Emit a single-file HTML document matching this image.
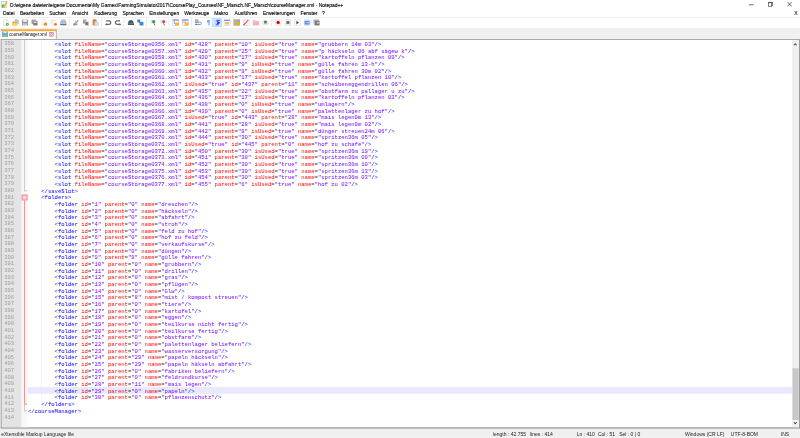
<!DOCTYPE html>
<html><head><meta charset="utf-8">
<style>
html,body{margin:0;padding:0;width:800px;height:438px;overflow:hidden;background:#fff;}
#outer{position:absolute;left:0;top:0;width:800px;height:438px;overflow:hidden;filter:blur(0.25px);}
#w{position:absolute;left:0;top:0;width:1920px;height:1051px;transform:scale(0.4166667);transform-origin:0 0;background:#fff;font-family:"Liberation Sans",sans-serif;font-size:12px;color:#000;overflow:hidden;}
.abs{position:absolute;}
#title{position:absolute;left:0;top:0;width:1920px;height:22px;background:#fff;}
#title .txt{position:absolute;left:24px;top:5.5px;font-size:12.6px;color:#000;white-space:nowrap;-webkit-text-stroke:0.3px #000;transform:scaleX(0.941);transform-origin:0 0;}
#menu{position:absolute;left:0;top:22px;width:1920px;height:20px;background:#fff;}
#menu span{position:absolute;top:3px;font-size:12.6px;white-space:nowrap;color:#000;-webkit-text-stroke:0.3px #000;transform:scaleX(0.952);transform-origin:0 0;}
#tb{position:absolute;left:0;top:43px;width:1920px;height:24px;background:#fff;}
#tb svg{position:absolute;top:3px;width:16px;height:16px;}
#tb .sep{position:absolute;top:1px;width:1px;height:20px;background:#d0d0d0;}
#tabbar{position:absolute;left:0;top:67px;width:1920px;height:27px;background:#f0f0f0;}
#tab{position:absolute;left:2px;top:3px;width:134px;height:24px;background:#fff;border-right:2px solid #a8a8a8;box-sizing:border-box;}
#tab .orange{position:absolute;left:0;top:0;width:133px;height:5px;background:#fbaa3c;}
#tab .name{position:absolute;left:20px;top:5.5px;font-size:12.6px;white-space:nowrap;transform:scaleX(0.824);transform-origin:0 0;}
#ed{position:absolute;left:2px;top:94px;width:1918px;height:935px;border:2px solid #a0a0a0;border-left-color:#8c8c8c;border-top-color:#999;border-right-color:#888;border-bottom:3px solid #707070;box-sizing:border-box;background:#fff;overflow:hidden;}
#lnm{position:absolute;left:0;top:0;width:48px;height:100%;background:#e4e4e4;}
#nums{position:absolute;left:0;top:2px;width:30px;text-align:right;font-family:"Liberation Mono",monospace;font-size:13.33px;line-height:16px;color:#a0a0a0;}
#fold{position:absolute;left:48px;top:0;width:14px;height:100%;background:#f8f8f8;}
.fl{position:absolute;}
#code{position:absolute;left:63px;top:3px;right:17px;font-family:"Liberation Mono",monospace;font-size:13.33px;line-height:16px;white-space:pre;-webkit-text-stroke:0.1px currentColor;}
.l{height:16px;}
.cur{}
#hl{position:absolute;left:62px;top:833px;right:17px;height:16px;background:#e8e8ff;}
b{font-weight:normal;}
.t{color:#2020ff;}
.a{color:#ff2020;}
.e{color:#303030;}
.v{color:#8020ff;}
#vs{position:absolute;right:0;top:0;width:17px;height:100%;background:#f0f0f0;}
#thumb{position:absolute;left:1px;top:788px;width:15px;height:124px;background:#c8c8c8;}
#vs svg{position:absolute;left:3px;width:9px;height:7px;}
#status{position:absolute;left:0;top:1029px;width:1920px;height:22px;background:#f0f0f0;border-top:1px solid #f8f8f8;box-sizing:border-box;}
#status span{position:absolute;top:5px;font-size:12.6px;white-space:nowrap;color:#1a1a1a;transform:scaleX(0.952);transform-origin:0 0;}
</style></head><body><div id="outer"><div id="w">
<div id="title">
 <svg class="abs" style="left:2px;top:2px" width="16" height="17" viewBox="0 0 16 17"><rect x="1.5" y="1.5" width="13" height="15" fill="#f0f6f4" stroke="#a8b4bc"/><rect x="3" y="3" width="10" height="2" fill="#d8e4f0"/><path d="M2 9 Q6 8 9 10 L10 16 H2 Z" fill="#48c020"/><path d="M7 15 L14 4" stroke="#e8b830" stroke-width="4"/><path d="M12.5 2.5 L15 0.5" stroke="#f09098" stroke-width="3"/></svg>
 <div class="txt">D:\eigene dateien\eigene Documente\My Games\FarmingSimulator2017\CoursePlay_Courses\NF_Marsch.NF_Marsch\courseManager.xml - Notepad++</div>
 <svg class="abs" style="left:1797px;top:6px" width="12" height="12" viewBox="0 0 12 12"><path d="M0 5.5 H12" stroke="#000" stroke-width="1.4"/></svg>
 <svg class="abs" style="left:1843px;top:4px" width="12" height="12" viewBox="0 0 12 12"><rect x="0.7" y="2.7" width="8.6" height="8.6" fill="none" stroke="#000" stroke-width="1.4"/><path d="M2.7 2.5 V0.7 H11.3 V9.3 H9.5" fill="none" stroke="#000" stroke-width="1.4"/></svg>
 <svg class="abs" style="left:1889px;top:4px" width="12" height="12" viewBox="0 0 12 12"><path d="M0.5 0.5 L11.5 11.5 M11.5 0.5 L0.5 11.5" stroke="#000" stroke-width="1.4"/></svg>
</div>
<div id="menu">
 <span style="left:7px">Datei</span><span style="left:48px">Bearbeiten</span><span style="left:118px">Suchen</span><span style="left:172px">Ansicht</span><span style="left:226px">Kodierung</span><span style="left:294px">Sprachen</span><span style="left:358px">Einstellungen</span><span style="left:442px">Werkzeuge</span><span style="left:514px">Makro</span><span style="left:563px">Ausführen</span><span style="left:631px">Erweiterungen</span><span style="left:721px">Fenster</span><span style="left:773px">?</span>
 <span style="left:1906px;color:#404040">X</span>
</div>
<div class="abs" style="left:0;top:41px;width:1920px;height:2px;background:#ececec"></div>
<div id="tb">
<svg style="left:5.5px" viewBox="0 0 16 16"><path d="M2.5 0.5 H10 L13.5 4 V15.5 H2.5 Z" fill="#fbfbfb" stroke="#c8c8c8"/><path d="M10 0.5 V4 H13.5" fill="none" stroke="#c8c8c8"/><circle cx="11.5" cy="12.5" r="3.5" fill="#4e9a2a"/><circle cx="11.5" cy="12.5" r="1.3" fill="#d8f0c8"/></svg>
<svg style="left:28.5px" viewBox="0 0 16 16"><path d="M7 0.5 H13 L15.5 3 V11 H7 Z" fill="#a8c8f0" stroke="#7aa0d8"/><path d="M0.5 5 H5 L6.5 6.5 H12 V15 H0.5 Z" fill="#f0b030"/><path d="M0.5 9 H13 V15 H0.5 Z" fill="#fbd060"/></svg>
<svg style="left:51.5px" viewBox="0 0 16 16"><rect x="1" y="1" width="14" height="14" fill="#8c8c8c"/><rect x="3.5" y="2" width="9" height="4.5" fill="#f4f4f4"/><rect x="3" y="9" width="10" height="6" fill="#d4d4d4"/><rect x="5" y="10.5" width="6" height="1.5" fill="#8c8c8c"/></svg>
<svg style="left:74.5px" viewBox="0 0 16 16"><rect x="0.5" y="0.5" width="11" height="11" rx="1" fill="#8c8c8c"/><rect x="4" y="4" width="11.5" height="11.5" rx="1" fill="#7a7a7a" stroke="#fff" stroke-width="1"/><rect x="6.5" y="6" width="6" height="3" fill="#f0f0f0"/></svg>
<svg style="left:97.5px" viewBox="0 0 16 16"><path d="M2.5 0.5 H10 L13.5 4 V15.5 H2.5 Z" fill="#f8f8f8" stroke="#dcdcdc"/><circle cx="11" cy="12" r="3.8" fill="#f07a20"/><path d="M9.5 12 H12.5" stroke="#ffe0c0" stroke-width="1"/></svg>
<svg style="left:120.5px" viewBox="0 0 16 16"><path d="M0.5 0.5 H8 L11 3.5 V12 H0.5 Z" fill="#f4f4f4" stroke="#dcdcdc"/><path d="M3.5 3.5 H10 L13.5 7 V15.5 H3.5 Z" fill="#f8f8f8" stroke="#d8d8d8"/><circle cx="12" cy="12.5" r="3.5" fill="#f07a20"/></svg>
<svg style="left:143.5px" viewBox="0 0 16 16"><path d="M4 0.5 H12 V6 H4 Z" fill="#a8d0f4" stroke="#88b0d8"/><path d="M2 5 H14 L15.5 9 V14 H0.5 V9 Z" fill="#b8c4cc" stroke="#8898a8"/><rect x="1" y="12" width="14" height="2.5" fill="#5a6878"/></svg>
<div class="sep" style="left:166px"></div>
<svg style="left:174.5px" viewBox="0 0 16 16"><path d="M3 14 L13 2" stroke="#8c8c8c" stroke-width="2.6"/><path d="M6 5 L10 11" stroke="#999" stroke-width="2"/><circle cx="4" cy="12.5" r="3" fill="#8a8a8a"/><circle cx="9" cy="13" r="2" fill="#9a9a9a"/></svg>
<svg style="left:197.5px" viewBox="0 0 16 16"><rect x="1" y="0.5" width="8" height="10" fill="#8c8c8c"/><rect x="2.5" y="2" width="4" height="1.5" fill="#d8d8d8"/><rect x="6" y="6" width="9" height="9.5" fill="#7a7a7a" stroke="#fff" stroke-width="1"/></svg>
<svg style="left:220.5px" viewBox="0 0 16 16"><rect x="1" y="1" width="10" height="14" rx="1" fill="#e08a28"/><rect x="3.5" y="0" width="5" height="3" fill="#c87020"/><path d="M6.5 5.5 H12.5 L15.5 8.5 V15.5 H6.5 Z" fill="#c8e4fa" stroke="#9cc4e8"/></svg>
<div class="sep" style="left:243px"></div>
<svg style="left:251.5px" viewBox="0 0 16 16"><path d="M3 4 H10 A4.2 4.2 0 0 1 10 12.5 H2" fill="none" stroke="#666" stroke-width="3"/><path d="M0 12.5 L4.5 9 V16 Z" fill="#666"/></svg>
<svg style="left:274.5px" viewBox="0 0 16 16"><path d="M13 4 H6 A4.2 4.2 0 0 0 6 12.5 H14" fill="none" stroke="#666" stroke-width="3"/><path d="M16 12.5 L11.5 9 V16 Z" fill="#666"/></svg>
<div class="sep" style="left:297px"></div>
<svg style="left:305.5px" viewBox="0 0 16 16"><path d="M3 4 H13 L15.5 11 V14 H0.5 V11 Z" fill="#4a5664"/><rect x="1" y="10" width="14" height="1.2" fill="#8898a8"/><rect x="5" y="2" width="6" height="3" fill="#5a6674"/></svg>
<svg style="left:328.5px" viewBox="0 0 16 16"><rect x="0.5" y="0.5" width="7" height="7" fill="#3a78e0"/><rect x="6" y="6.5" width="9.5" height="9" fill="#3c80e8"/><path d="M4 7 L9 9" stroke="#48a048" stroke-width="2.5"/></svg>
<div class="sep" style="left:351px"></div>
<svg style="left:359.5px" viewBox="0 0 16 16"><circle cx="5" cy="6" r="4.5" fill="#d0e4f8"/><circle cx="9" cy="6" r="3.8" fill="#3e9a38"/><path d="M9.5 10 L12 15" stroke="#8a5a30" stroke-width="2.2"/></svg>
<svg style="left:382.5px" viewBox="0 0 16 16"><circle cx="5" cy="6" r="4.5" fill="#d0ecf4"/><circle cx="10" cy="6" r="3.8" fill="#e84858"/><path d="M9.5 10 L12 15" stroke="#8a5a30" stroke-width="2.2"/></svg>
<div class="sep" style="left:405px"></div>
<svg style="left:413.5px" viewBox="0 0 16 16"><rect x="0.5" y="0.5" width="14" height="14" fill="#fff" stroke="#8090d8"/><rect x="0.5" y="0.5" width="14" height="3" fill="#7080d0"/><rect x="6" y="8" width="9.5" height="8" rx="1" fill="#f4b830"/><rect x="3" y="5" width="3" height="6" fill="#9aa0b8"/></svg>
<svg style="left:436.5px" viewBox="0 0 16 16"><rect x="0.5" y="0.5" width="14" height="14" fill="#fff" stroke="#8090d8"/><rect x="0.5" y="0.5" width="14" height="3" fill="#7080d0"/><rect x="6" y="8" width="9.5" height="8" rx="1" fill="#f4b830"/><rect x="2" y="6" width="8" height="2" fill="#9aa0b8"/></svg>
<div class="sep" style="left:459px"></div>
<svg style="left:467.5px" viewBox="0 0 16 16"><rect x="0" y="1" width="8" height="2" fill="#333"/><rect x="0" y="6" width="10" height="2" fill="#333"/><path d="M0 12.5 H13 A2.5 2.5 0 0 0 13 7.5 H11" fill="none" stroke="#3a80d8" stroke-width="2"/><path d="M4 10 L0.5 12.5 L4 15" fill="#3a80d8"/></svg>
<svg style="left:490.5px" viewBox="0 0 16 16"><path d="M8 2 H13 V15 H11.5 V3.5 H10.5 V15 H9 V8.5 A3.2 3.2 0 0 1 8 2 Z" fill="#78a8f0"/></svg>
<div class="abs" style="left:510px;top:1px;width:22px;height:21px;background:#cce8ff;border:1px solid #99d1ff;box-sizing:border-box"></div>
<svg style="left:513.5px" viewBox="0 0 16 16"><rect x="2" y="1" width="1.5" height="14" fill="#b8c4f8"/><rect x="5" y="1.5" width="10" height="2.5" fill="#3848f0"/><path d="M5 5 H9.5 L15 8.5 L9.5 12 H5 L8 8.5 Z" fill="#2030f0"/><rect x="4" y="12.5" width="7" height="2.5" fill="#3848f0"/></svg>
<svg style="left:536.5px" viewBox="0 0 16 16"><rect x="0.5" y="1.5" width="15" height="13" fill="#f6f8ff" stroke="#8898e0"/><rect x="0.5" y="1.5" width="15" height="2.5" fill="#7888d8"/><path d="M2 7 H14 L12 13 H4 Z" fill="#f8c840"/></svg>
<svg style="left:559.5px" viewBox="0 0 16 16"><rect x="0.5" y="0.5" width="15" height="15" fill="#b0b8a0" stroke="#8a9080"/><path d="M3 2 L8 12 L12 6 L14 14" stroke="#e8b020" stroke-width="3" fill="none"/><rect x="9" y="2" width="5" height="4" fill="#7ab0e0"/></svg>
<svg style="left:582.5px" viewBox="0 0 16 16"><rect x="2.5" y="0.5" width="13" height="15" fill="#fff" stroke="#a0a0a0"/><path d="M1 15 L13 2" stroke="#e03040" stroke-width="2.5"/></svg>
<svg style="left:605.5px" viewBox="0 0 16 16"><path d="M0.5 3 H6 L7.5 5 H15.5 V14.5 H0.5 Z" fill="#f0c0c8" stroke="#e8a0b0"/><rect x="1.5" y="8" width="13" height="6" fill="#f4b0b8"/></svg>
<svg style="left:628.5px" viewBox="0 0 16 16"><ellipse cx="8" cy="8.5" rx="7.5" ry="5.5" fill="#fff4e0" stroke="#f0c060" stroke-width="1.2"/><rect x="5" y="4" width="6" height="7" fill="#3a68b8"/><rect x="5" y="9" width="6" height="2" fill="#a0c8e8"/></svg>
<div class="sep" style="left:651px"></div>
<svg style="left:659.5px" viewBox="0 0 16 16"><rect x="0.5" y="0.5" width="15" height="15" fill="#f8f8f8" stroke="#c8c8c8"/><circle cx="7.5" cy="8" r="4" fill="#e00000"/></svg>
<svg style="left:682.5px" viewBox="0 0 16 16"><rect x="0.5" y="0.5" width="15" height="15" fill="#ececec" stroke="#d0d0d0"/><rect x="4.5" y="4.5" width="7" height="7" fill="#6e6e6e"/></svg>
<svg style="left:705.5px" viewBox="0 0 16 16"><rect x="0.5" y="0.5" width="15" height="15" fill="#fff" stroke="#c0c0c0"/><path d="M5.5 3.5 L11.5 8 L5.5 12.5 Z" fill="#404040"/></svg>
<svg style="left:728.5px" viewBox="0 0 16 16"><rect x="0.5" y="0.5" width="15" height="15" fill="#f0f4fa" stroke="#c0c8d0"/><rect x="2" y="4" width="12" height="9" fill="#4a8ae0"/><path d="M4 8.5 H12 M9 6 L12 8.5 L9 11" stroke="#fff" stroke-width="1.2" fill="none"/></svg>
<svg style="left:751.5px" viewBox="0 0 16 16"><rect x="0.5" y="0.5" width="13" height="13" rx="1" fill="#8a8a8a"/><rect x="3" y="3" width="12.5" height="12.5" rx="1" fill="#7a7a7a" stroke="#fff"/><path d="M8 9 H14 M11 6.5 V11.5" stroke="#e8e8e8" stroke-width="1.5"/></svg>
</div>
<div id="tabbar">
 <div id="tab"><div class="orange"></div>
  <svg class="abs" style="left:3px;top:5px" width="14" height="14" viewBox="0 0 14 14"><rect x="0" y="0" width="14" height="14" fill="#5a9ae0"/><rect x="3" y="0" width="8" height="4.5" fill="#e8f0fa"/><rect x="2" y="8" width="10" height="6" fill="#8ac878"/></svg>
  <div class="name">courseManager.xml</div>
  <svg class="abs" style="left:116px;top:7px" width="11" height="11" viewBox="0 0 11 11"><rect x="0.5" y="0.5" width="10" height="10" fill="#dc98b4" stroke="#a86888"/><path d="M3 3 L8 8 M8 3 L3 8" stroke="#fff" stroke-width="1.6"/></svg>
 </div>
</div>
<div class="abs" style="left:0;top:94px;width:2px;height:935px;background:#e0e0e0"></div>
<div id="ed">
 <div id="lnm"><div id="nums"><div>358</div><div>359</div><div>360</div><div>361</div><div>362</div><div>363</div><div>364</div><div>365</div><div>366</div><div>367</div><div>368</div><div>369</div><div>370</div><div>371</div><div>372</div><div>373</div><div>374</div><div>375</div><div>376</div><div>377</div><div>378</div><div>379</div><div>380</div><div>381</div><div>382</div><div>383</div><div>384</div><div>385</div><div>386</div><div>387</div><div>388</div><div>389</div><div>390</div><div>391</div><div>392</div><div>393</div><div>394</div><div>395</div><div>396</div><div>397</div><div>398</div><div>399</div><div>400</div><div>401</div><div>402</div><div>403</div><div>404</div><div>405</div><div>406</div><div>407</div><div>408</div><div>409</div><div>410</div><div>411</div><div>412</div><div>413</div><div>414</div></div></div>
 <div id="fold"><div class="fl" style="left:6px;top:0;width:2px;height:363px;background:#c4c4c4"></div>
<div class="fl" style="left:6px;top:361px;width:7px;height:2px;background:#c4c4c4"></div>
<div class="fl" style="left:0px;top:371px;width:14px;height:14px;background:#f8c4c8;box-sizing:border-box;border:2px solid #f09098"></div>
<div class="fl" style="left:4px;top:377px;width:6px;height:2px;background:#fff"></div>
<div class="fl" style="left:6px;top:385px;width:2px;height:490px;background:#f08080"></div>
<div class="fl" style="left:6px;top:873px;width:7px;height:2px;background:#f08080"></div>
<div class="fl" style="left:6px;top:875px;width:2px;height:16px;background:#c4c4c4"></div>
<div class="fl" style="left:6px;top:889px;width:7px;height:2px;background:#c4c4c4"></div></div>
 <div id="hl"></div>
 <div id="code"><div class="l">        <b class="t">&lt;slot</b> <b class="a">fileName</b><b class="e">=</b><b class="v">&quot;courseStorage0356.xml&quot;</b> <b class="a">id</b><b class="e">=</b><b class="v">&quot;428&quot;</b> <b class="a">parent</b><b class="e">=</b><b class="v">&quot;10&quot;</b> <b class="a">isUsed</b><b class="e">=</b><b class="v">&quot;true&quot;</b> <b class="a">name</b><b class="e">=</b><b class="v">&quot;grubbern 14m 03&quot;</b><b class="t">/&gt;</b></div><div class="l">        <b class="t">&lt;slot</b> <b class="a">fileName</b><b class="e">=</b><b class="v">&quot;courseStorage0357.xml&quot;</b> <b class="a">id</b><b class="e">=</b><b class="v">&quot;429&quot;</b> <b class="a">parent</b><b class="e">=</b><b class="v">&quot;25&quot;</b> <b class="a">isUsed</b><b class="e">=</b><b class="v">&quot;true&quot;</b> <b class="a">name</b><b class="e">=</b><b class="v">&quot;p häckseln 06 abf sägew k&quot;</b><b class="t">/&gt;</b></div><div class="l">        <b class="t">&lt;slot</b> <b class="a">fileName</b><b class="e">=</b><b class="v">&quot;courseStorage0358.xml&quot;</b> <b class="a">id</b><b class="e">=</b><b class="v">&quot;430&quot;</b> <b class="a">parent</b><b class="e">=</b><b class="v">&quot;17&quot;</b> <b class="a">isUsed</b><b class="e">=</b><b class="v">&quot;true&quot;</b> <b class="a">name</b><b class="e">=</b><b class="v">&quot;kartoffeln pflanzen 09&quot;</b><b class="t">/&gt;</b></div><div class="l">        <b class="t">&lt;slot</b> <b class="a">fileName</b><b class="e">=</b><b class="v">&quot;courseStorage0359.xml&quot;</b> <b class="a">id</b><b class="e">=</b><b class="v">&quot;431&quot;</b> <b class="a">parent</b><b class="e">=</b><b class="v">&quot;9&quot;</b> <b class="a">isUsed</b><b class="e">=</b><b class="v">&quot;true&quot;</b> <b class="a">name</b><b class="e">=</b><b class="v">&quot;gülle fahren 13-h&quot;</b><b class="t">/&gt;</b></div><div class="l">        <b class="t">&lt;slot</b> <b class="a">fileName</b><b class="e">=</b><b class="v">&quot;courseStorage0360.xml&quot;</b> <b class="a">id</b><b class="e">=</b><b class="v">&quot;432&quot;</b> <b class="a">parent</b><b class="e">=</b><b class="v">&quot;9&quot;</b> <b class="a">isUsed</b><b class="e">=</b><b class="v">&quot;true&quot;</b> <b class="a">name</b><b class="e">=</b><b class="v">&quot;gülle fahren 30m 02&quot;</b><b class="t">/&gt;</b></div><div class="l">        <b class="t">&lt;slot</b> <b class="a">fileName</b><b class="e">=</b><b class="v">&quot;courseStorage0361.xml&quot;</b> <b class="a">id</b><b class="e">=</b><b class="v">&quot;433&quot;</b> <b class="a">parent</b><b class="e">=</b><b class="v">&quot;17&quot;</b> <b class="a">isUsed</b><b class="e">=</b><b class="v">&quot;true&quot;</b> <b class="a">name</b><b class="e">=</b><b class="v">&quot;kartoffel pflanzen 10&quot;</b><b class="t">/&gt;</b></div><div class="l">        <b class="t">&lt;slot</b> <b class="a">fileName</b><b class="e">=</b><b class="v">&quot;courseStorage0362.xml&quot;</b> <b class="a">isUsed</b><b class="e">=</b><b class="v">&quot;true&quot;</b> <b class="a">id</b><b class="e">=</b><b class="v">&quot;437&quot;</b> <b class="a">parent</b><b class="e">=</b><b class="v">&quot;11&quot;</b> <b class="a">name</b><b class="e">=</b><b class="v">&quot;scheibeneggendrillen 06&quot;</b><b class="t">/&gt;</b></div><div class="l">        <b class="t">&lt;slot</b> <b class="a">fileName</b><b class="e">=</b><b class="v">&quot;courseStorage0363.xml&quot;</b> <b class="a">id</b><b class="e">=</b><b class="v">&quot;435&quot;</b> <b class="a">parent</b><b class="e">=</b><b class="v">&quot;22&quot;</b> <b class="a">isUsed</b><b class="e">=</b><b class="v">&quot;true&quot;</b> <b class="a">name</b><b class="e">=</b><b class="v">&quot;obstfarm zu pallager u zu&quot;</b><b class="t">/&gt;</b></div><div class="l">        <b class="t">&lt;slot</b> <b class="a">fileName</b><b class="e">=</b><b class="v">&quot;courseStorage0364.xml&quot;</b> <b class="a">id</b><b class="e">=</b><b class="v">&quot;436&quot;</b> <b class="a">parent</b><b class="e">=</b><b class="v">&quot;17&quot;</b> <b class="a">isUsed</b><b class="e">=</b><b class="v">&quot;true&quot;</b> <b class="a">name</b><b class="e">=</b><b class="v">&quot;kartoffeln pflanzen 03&quot;</b><b class="t">/&gt;</b></div><div class="l">        <b class="t">&lt;slot</b> <b class="a">fileName</b><b class="e">=</b><b class="v">&quot;courseStorage0365.xml&quot;</b> <b class="a">id</b><b class="e">=</b><b class="v">&quot;438&quot;</b> <b class="a">parent</b><b class="e">=</b><b class="v">&quot;0&quot;</b> <b class="a">isUsed</b><b class="e">=</b><b class="v">&quot;true&quot;</b> <b class="a">name</b><b class="e">=</b><b class="v">&quot;umlagern&quot;</b><b class="t">/&gt;</b></div><div class="l">        <b class="t">&lt;slot</b> <b class="a">fileName</b><b class="e">=</b><b class="v">&quot;courseStorage0366.xml&quot;</b> <b class="a">id</b><b class="e">=</b><b class="v">&quot;439&quot;</b> <b class="a">parent</b><b class="e">=</b><b class="v">&quot;0&quot;</b> <b class="a">isUsed</b><b class="e">=</b><b class="v">&quot;true&quot;</b> <b class="a">name</b><b class="e">=</b><b class="v">&quot;palettenlager zu hof&quot;</b><b class="t">/&gt;</b></div><div class="l">        <b class="t">&lt;slot</b> <b class="a">fileName</b><b class="e">=</b><b class="v">&quot;courseStorage0367.xml&quot;</b> <b class="a">isUsed</b><b class="e">=</b><b class="v">&quot;true&quot;</b> <b class="a">id</b><b class="e">=</b><b class="v">&quot;443&quot;</b> <b class="a">parent</b><b class="e">=</b><b class="v">&quot;28&quot;</b> <b class="a">name</b><b class="e">=</b><b class="v">&quot;mais legen9m 13&quot;</b><b class="t">/&gt;</b></div><div class="l">        <b class="t">&lt;slot</b> <b class="a">fileName</b><b class="e">=</b><b class="v">&quot;courseStorage0368.xml&quot;</b> <b class="a">id</b><b class="e">=</b><b class="v">&quot;441&quot;</b> <b class="a">parent</b><b class="e">=</b><b class="v">&quot;28&quot;</b> <b class="a">isUsed</b><b class="e">=</b><b class="v">&quot;true&quot;</b> <b class="a">name</b><b class="e">=</b><b class="v">&quot;mais legen9m 02&quot;</b><b class="t">/&gt;</b></div><div class="l">        <b class="t">&lt;slot</b> <b class="a">fileName</b><b class="e">=</b><b class="v">&quot;courseStorage0369.xml&quot;</b> <b class="a">id</b><b class="e">=</b><b class="v">&quot;442&quot;</b> <b class="a">parent</b><b class="e">=</b><b class="v">&quot;8&quot;</b> <b class="a">isUsed</b><b class="e">=</b><b class="v">&quot;true&quot;</b> <b class="a">name</b><b class="e">=</b><b class="v">&quot;dünger streuen24m 06&quot;</b><b class="t">/&gt;</b></div><div class="l">        <b class="t">&lt;slot</b> <b class="a">fileName</b><b class="e">=</b><b class="v">&quot;courseStorage0370.xml&quot;</b> <b class="a">id</b><b class="e">=</b><b class="v">&quot;444&quot;</b> <b class="a">parent</b><b class="e">=</b><b class="v">&quot;30&quot;</b> <b class="a">isUsed</b><b class="e">=</b><b class="v">&quot;true&quot;</b> <b class="a">name</b><b class="e">=</b><b class="v">&quot;spritzen36m 05&quot;</b><b class="t">/&gt;</b></div><div class="l">        <b class="t">&lt;slot</b> <b class="a">fileName</b><b class="e">=</b><b class="v">&quot;courseStorage0371.xml&quot;</b> <b class="a">isUsed</b><b class="e">=</b><b class="v">&quot;true&quot;</b> <b class="a">id</b><b class="e">=</b><b class="v">&quot;445&quot;</b> <b class="a">parent</b><b class="e">=</b><b class="v">&quot;0&quot;</b> <b class="a">name</b><b class="e">=</b><b class="v">&quot;hof zu schafe&quot;</b><b class="t">/&gt;</b></div><div class="l">        <b class="t">&lt;slot</b> <b class="a">fileName</b><b class="e">=</b><b class="v">&quot;courseStorage0372.xml&quot;</b> <b class="a">id</b><b class="e">=</b><b class="v">&quot;450&quot;</b> <b class="a">parent</b><b class="e">=</b><b class="v">&quot;30&quot;</b> <b class="a">isUsed</b><b class="e">=</b><b class="v">&quot;true&quot;</b> <b class="a">name</b><b class="e">=</b><b class="v">&quot;spritzen36m 19&quot;</b><b class="t">/&gt;</b></div><div class="l">        <b class="t">&lt;slot</b> <b class="a">fileName</b><b class="e">=</b><b class="v">&quot;courseStorage0373.xml&quot;</b> <b class="a">id</b><b class="e">=</b><b class="v">&quot;451&quot;</b> <b class="a">parent</b><b class="e">=</b><b class="v">&quot;30&quot;</b> <b class="a">isUsed</b><b class="e">=</b><b class="v">&quot;true&quot;</b> <b class="a">name</b><b class="e">=</b><b class="v">&quot;spritzen36m 09&quot;</b><b class="t">/&gt;</b></div><div class="l">        <b class="t">&lt;slot</b> <b class="a">fileName</b><b class="e">=</b><b class="v">&quot;courseStorage0374.xml&quot;</b> <b class="a">id</b><b class="e">=</b><b class="v">&quot;452&quot;</b> <b class="a">parent</b><b class="e">=</b><b class="v">&quot;30&quot;</b> <b class="a">isUsed</b><b class="e">=</b><b class="v">&quot;true&quot;</b> <b class="a">name</b><b class="e">=</b><b class="v">&quot;spritzen36m 10&quot;</b><b class="t">/&gt;</b></div><div class="l">        <b class="t">&lt;slot</b> <b class="a">fileName</b><b class="e">=</b><b class="v">&quot;courseStorage0375.xml&quot;</b> <b class="a">id</b><b class="e">=</b><b class="v">&quot;453&quot;</b> <b class="a">parent</b><b class="e">=</b><b class="v">&quot;30&quot;</b> <b class="a">isUsed</b><b class="e">=</b><b class="v">&quot;true&quot;</b> <b class="a">name</b><b class="e">=</b><b class="v">&quot;spritzen36m 13&quot;</b><b class="t">/&gt;</b></div><div class="l">        <b class="t">&lt;slot</b> <b class="a">fileName</b><b class="e">=</b><b class="v">&quot;courseStorage0376.xml&quot;</b> <b class="a">id</b><b class="e">=</b><b class="v">&quot;454&quot;</b> <b class="a">parent</b><b class="e">=</b><b class="v">&quot;30&quot;</b> <b class="a">isUsed</b><b class="e">=</b><b class="v">&quot;true&quot;</b> <b class="a">name</b><b class="e">=</b><b class="v">&quot;spritzen36m 03&quot;</b><b class="t">/&gt;</b></div><div class="l">        <b class="t">&lt;slot</b> <b class="a">fileName</b><b class="e">=</b><b class="v">&quot;courseStorage0377.xml&quot;</b> <b class="a">id</b><b class="e">=</b><b class="v">&quot;455&quot;</b> <b class="a">parent</b><b class="e">=</b><b class="v">&quot;6&quot;</b> <b class="a">isUsed</b><b class="e">=</b><b class="v">&quot;true&quot;</b> <b class="a">name</b><b class="e">=</b><b class="v">&quot;hof zu 02&quot;</b><b class="t">/&gt;</b></div><div class="l">    <b class="t">&lt;/saveSlot&gt;</b></div><div class="l">    <b class="t">&lt;folders&gt;</b></div><div class="l">        <b class="t">&lt;folder</b> <b class="a">id</b><b class="e">=</b><b class="v">&quot;1&quot;</b> <b class="a">parent</b><b class="e">=</b><b class="v">&quot;0&quot;</b> <b class="a">name</b><b class="e">=</b><b class="v">&quot;dreschen&quot;</b><b class="t">/&gt;</b></div><div class="l">        <b class="t">&lt;folder</b> <b class="a">id</b><b class="e">=</b><b class="v">&quot;2&quot;</b> <b class="a">parent</b><b class="e">=</b><b class="v">&quot;0&quot;</b> <b class="a">name</b><b class="e">=</b><b class="v">&quot;häckseln&quot;</b><b class="t">/&gt;</b></div><div class="l">        <b class="t">&lt;folder</b> <b class="a">id</b><b class="e">=</b><b class="v">&quot;3&quot;</b> <b class="a">parent</b><b class="e">=</b><b class="v">&quot;0&quot;</b> <b class="a">name</b><b class="e">=</b><b class="v">&quot;abfahrt&quot;</b><b class="t">/&gt;</b></div><div class="l">        <b class="t">&lt;folder</b> <b class="a">id</b><b class="e">=</b><b class="v">&quot;4&quot;</b> <b class="a">parent</b><b class="e">=</b><b class="v">&quot;0&quot;</b> <b class="a">name</b><b class="e">=</b><b class="v">&quot;stroh&quot;</b><b class="t">/&gt;</b></div><div class="l">        <b class="t">&lt;folder</b> <b class="a">id</b><b class="e">=</b><b class="v">&quot;5&quot;</b> <b class="a">parent</b><b class="e">=</b><b class="v">&quot;0&quot;</b> <b class="a">name</b><b class="e">=</b><b class="v">&quot;feld zu hof&quot;</b><b class="t">/&gt;</b></div><div class="l">        <b class="t">&lt;folder</b> <b class="a">id</b><b class="e">=</b><b class="v">&quot;6&quot;</b> <b class="a">parent</b><b class="e">=</b><b class="v">&quot;0&quot;</b> <b class="a">name</b><b class="e">=</b><b class="v">&quot;hof zu feld&quot;</b><b class="t">/&gt;</b></div><div class="l">        <b class="t">&lt;folder</b> <b class="a">id</b><b class="e">=</b><b class="v">&quot;7&quot;</b> <b class="a">parent</b><b class="e">=</b><b class="v">&quot;0&quot;</b> <b class="a">name</b><b class="e">=</b><b class="v">&quot;verkaufskurse&quot;</b><b class="t">/&gt;</b></div><div class="l">        <b class="t">&lt;folder</b> <b class="a">id</b><b class="e">=</b><b class="v">&quot;8&quot;</b> <b class="a">parent</b><b class="e">=</b><b class="v">&quot;0&quot;</b> <b class="a">name</b><b class="e">=</b><b class="v">&quot;düngen&quot;</b><b class="t">/&gt;</b></div><div class="l">        <b class="t">&lt;folder</b> <b class="a">id</b><b class="e">=</b><b class="v">&quot;9&quot;</b> <b class="a">parent</b><b class="e">=</b><b class="v">&quot;8&quot;</b> <b class="a">name</b><b class="e">=</b><b class="v">&quot;gülle fahren&quot;</b><b class="t">/&gt;</b></div><div class="l">        <b class="t">&lt;folder</b> <b class="a">id</b><b class="e">=</b><b class="v">&quot;10&quot;</b> <b class="a">parent</b><b class="e">=</b><b class="v">&quot;0&quot;</b> <b class="a">name</b><b class="e">=</b><b class="v">&quot;grubbern&quot;</b><b class="t">/&gt;</b></div><div class="l">        <b class="t">&lt;folder</b> <b class="a">id</b><b class="e">=</b><b class="v">&quot;11&quot;</b> <b class="a">parent</b><b class="e">=</b><b class="v">&quot;0&quot;</b> <b class="a">name</b><b class="e">=</b><b class="v">&quot;drillen&quot;</b><b class="t">/&gt;</b></div><div class="l">        <b class="t">&lt;folder</b> <b class="a">id</b><b class="e">=</b><b class="v">&quot;12&quot;</b> <b class="a">parent</b><b class="e">=</b><b class="v">&quot;0&quot;</b> <b class="a">name</b><b class="e">=</b><b class="v">&quot;gras&quot;</b><b class="t">/&gt;</b></div><div class="l">        <b class="t">&lt;folder</b> <b class="a">id</b><b class="e">=</b><b class="v">&quot;13&quot;</b> <b class="a">parent</b><b class="e">=</b><b class="v">&quot;0&quot;</b> <b class="a">name</b><b class="e">=</b><b class="v">&quot;pflügen&quot;</b><b class="t">/&gt;</b></div><div class="l">        <b class="t">&lt;folder</b> <b class="a">id</b><b class="e">=</b><b class="v">&quot;14&quot;</b> <b class="a">parent</b><b class="e">=</b><b class="v">&quot;0&quot;</b> <b class="a">name</b><b class="e">=</b><b class="v">&quot;Glw&quot;</b><b class="t">/&gt;</b></div><div class="l">        <b class="t">&lt;folder</b> <b class="a">id</b><b class="e">=</b><b class="v">&quot;15&quot;</b> <b class="a">parent</b><b class="e">=</b><b class="v">&quot;8&quot;</b> <b class="a">name</b><b class="e">=</b><b class="v">&quot;mist / kompost streuen&quot;</b><b class="t">/&gt;</b></div><div class="l">        <b class="t">&lt;folder</b> <b class="a">id</b><b class="e">=</b><b class="v">&quot;16&quot;</b> <b class="a">parent</b><b class="e">=</b><b class="v">&quot;0&quot;</b> <b class="a">name</b><b class="e">=</b><b class="v">&quot;tiere&quot;</b><b class="t">/&gt;</b></div><div class="l">        <b class="t">&lt;folder</b> <b class="a">id</b><b class="e">=</b><b class="v">&quot;17&quot;</b> <b class="a">parent</b><b class="e">=</b><b class="v">&quot;0&quot;</b> <b class="a">name</b><b class="e">=</b><b class="v">&quot;kartofel&quot;</b><b class="t">/&gt;</b></div><div class="l">        <b class="t">&lt;folder</b> <b class="a">id</b><b class="e">=</b><b class="v">&quot;18&quot;</b> <b class="a">parent</b><b class="e">=</b><b class="v">&quot;0&quot;</b> <b class="a">name</b><b class="e">=</b><b class="v">&quot;eggen&quot;</b><b class="t">/&gt;</b></div><div class="l">        <b class="t">&lt;folder</b> <b class="a">id</b><b class="e">=</b><b class="v">&quot;19&quot;</b> <b class="a">parent</b><b class="e">=</b><b class="v">&quot;0&quot;</b> <b class="a">name</b><b class="e">=</b><b class="v">&quot;teilkurse nicht fertig&quot;</b><b class="t">/&gt;</b></div><div class="l">        <b class="t">&lt;folder</b> <b class="a">id</b><b class="e">=</b><b class="v">&quot;20&quot;</b> <b class="a">parent</b><b class="e">=</b><b class="v">&quot;0&quot;</b> <b class="a">name</b><b class="e">=</b><b class="v">&quot;teilkurse fertig&quot;</b><b class="t">/&gt;</b></div><div class="l">        <b class="t">&lt;folder</b> <b class="a">id</b><b class="e">=</b><b class="v">&quot;21&quot;</b> <b class="a">parent</b><b class="e">=</b><b class="v">&quot;0&quot;</b> <b class="a">name</b><b class="e">=</b><b class="v">&quot;obstfarm&quot;</b><b class="t">/&gt;</b></div><div class="l">        <b class="t">&lt;folder</b> <b class="a">id</b><b class="e">=</b><b class="v">&quot;22&quot;</b> <b class="a">parent</b><b class="e">=</b><b class="v">&quot;0&quot;</b> <b class="a">name</b><b class="e">=</b><b class="v">&quot;palettenlager beliefern&quot;</b><b class="t">/&gt;</b></div><div class="l">        <b class="t">&lt;folder</b> <b class="a">id</b><b class="e">=</b><b class="v">&quot;23&quot;</b> <b class="a">parent</b><b class="e">=</b><b class="v">&quot;0&quot;</b> <b class="a">name</b><b class="e">=</b><b class="v">&quot;wasserversorgung&quot;</b><b class="t">/&gt;</b></div><div class="l">        <b class="t">&lt;folder</b> <b class="a">id</b><b class="e">=</b><b class="v">&quot;24&quot;</b> <b class="a">parent</b><b class="e">=</b><b class="v">&quot;29&quot;</b> <b class="a">name</b><b class="e">=</b><b class="v">&quot;papeln häckseln&quot;</b><b class="t">/&gt;</b></div><div class="l">        <b class="t">&lt;folder</b> <b class="a">id</b><b class="e">=</b><b class="v">&quot;25&quot;</b> <b class="a">parent</b><b class="e">=</b><b class="v">&quot;29&quot;</b> <b class="a">name</b><b class="e">=</b><b class="v">&quot;papeln häkseln abfahrt&quot;</b><b class="t">/&gt;</b></div><div class="l">        <b class="t">&lt;folder</b> <b class="a">id</b><b class="e">=</b><b class="v">&quot;26&quot;</b> <b class="a">parent</b><b class="e">=</b><b class="v">&quot;0&quot;</b> <b class="a">name</b><b class="e">=</b><b class="v">&quot;fabriken beliefern&quot;</b><b class="t">/&gt;</b></div><div class="l">        <b class="t">&lt;folder</b> <b class="a">id</b><b class="e">=</b><b class="v">&quot;27&quot;</b> <b class="a">parent</b><b class="e">=</b><b class="v">&quot;0&quot;</b> <b class="a">name</b><b class="e">=</b><b class="v">&quot;feldrundkurse&quot;</b><b class="t">/&gt;</b></div><div class="l">        <b class="t">&lt;folder</b> <b class="a">id</b><b class="e">=</b><b class="v">&quot;28&quot;</b> <b class="a">parent</b><b class="e">=</b><b class="v">&quot;11&quot;</b> <b class="a">name</b><b class="e">=</b><b class="v">&quot;mais legen&quot;</b><b class="t">/&gt;</b></div><div class="l cur">        <b class="t">&lt;folder</b> <b class="a">id</b><b class="e">=</b><b class="v">&quot;29&quot;</b> <b class="a">parent</b><b class="e">=</b><b class="v">&quot;0&quot;</b> <b class="a">name</b><b class="e">=</b><b class="v">&quot;papeln&quot;</b><b class="t">/&gt;</b></div><div class="l">        <b class="t">&lt;folder</b> <b class="a">id</b><b class="e">=</b><b class="v">&quot;30&quot;</b> <b class="a">parent</b><b class="e">=</b><b class="v">&quot;0&quot;</b> <b class="a">name</b><b class="e">=</b><b class="v">&quot;pflanzenschutz&quot;</b><b class="t">/&gt;</b></div><div class="l">    <b class="t">&lt;/folders&gt;</b></div><div class="l"><b class="t">&lt;/courseManager&gt;</b></div><div class="l">&nbsp;</div></div>
 <div class="fl" style="left:95px;top:0;width:1px;height:354px;background:#e6e6e6"></div>
<div class="fl" style="left:95px;top:386px;width:1px;height:480px;background:#e6e6e6"></div>
 <div id="vs"><svg style="top:7px" viewBox="0 0 9 7"><path d="M1 6 L4.5 2 L8 6" fill="none" stroke="#505050" stroke-width="2.4"/></svg><div id="thumb"></div><svg style="top:916px" viewBox="0 0 9 7"><path d="M1 1 L4.5 5 L8 1" fill="none" stroke="#505050" stroke-width="2.4"/></svg></div>
</div>
<div id="status">
 <span style="left:3px">eXtensible Markup Language file</span>
 <span style="left:1183px">length : 42.755</span>
 <span style="left:1272px">lines : 414</span>
 <span style="left:1384px">Ln : 410</span>
 <span style="left:1435px">Col : 51</span>
 <span style="left:1486px">Sel : 0 | 0</span>
 <span style="left:1644px">Windows (CR LF)</span>
 <span style="left:1754px">UTF-8-BOM</span>
 <span style="left:1874px">INS</span>
</div>
</div></div></body></html>
